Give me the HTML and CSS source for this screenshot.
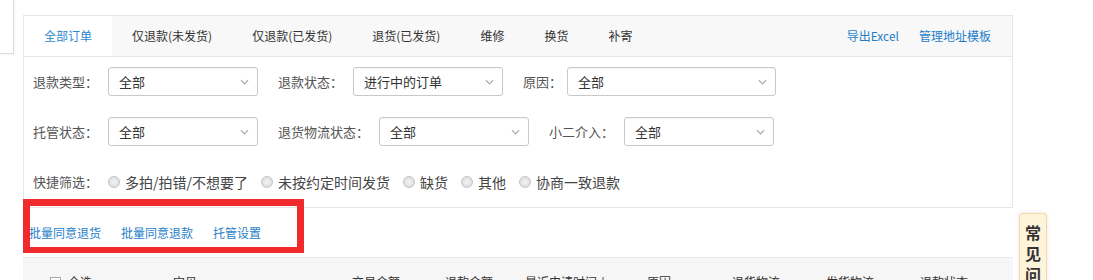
FILE: index.html
```html
<!DOCTYPE html>
<html>
<head>
  <meta charset="utf-8">
  <title>退款管理</title>
  <link rel="stylesheet" href="styles.css">
</head>
<body>

<div class="page">
  <div class="side-box"></div>

  <div class="main">
    <div class="filter-panel">
      <div class="tab-bar">
        <ul class="tabs">
          <li class="tab active">全部订单</li>
          <li class="tab">仅退款(未发货)</li>
          <li class="tab">仅退款(已发货)</li>
          <li class="tab">退货(已发货)</li>
          <li class="tab">维修</li>
          <li class="tab">换货</li>
          <li class="tab">补寄</li>
        </ul>
        <div class="tab-links">
          <a href="#">导出Excel</a>
          <a href="#">管理地址模板</a>
        </div>
      </div>

      <div class="filters">
        <div class="filter-row">
          <span class="filter-label">退款类型：</span>
          <div class="select">全部<svg class="arrow" viewBox="0 0 10 6"><path d="M1 1l4 4 4-4"/></svg></div>
          <span class="filter-label">退款状态：</span>
          <div class="select">进行中的订单<svg class="arrow" viewBox="0 0 10 6"><path d="M1 1l4 4 4-4"/></svg></div>
          <span class="filter-label short">原因：</span>
          <div class="select wide">全部<svg class="arrow" viewBox="0 0 10 6"><path d="M1 1l4 4 4-4"/></svg></div>
        </div>

        <div class="filter-row">
          <span class="filter-label">托管状态：</span>
          <div class="select">全部<svg class="arrow" viewBox="0 0 10 6"><path d="M1 1l4 4 4-4"/></svg></div>
          <span class="filter-label">退货物流状态：</span>
          <div class="select">全部<svg class="arrow" viewBox="0 0 10 6"><path d="M1 1l4 4 4-4"/></svg></div>
          <span class="filter-label">小二介入：</span>
          <div class="select">全部<svg class="arrow" viewBox="0 0 10 6"><path d="M1 1l4 4 4-4"/></svg></div>
        </div>

        <div class="filter-row">
          <span class="filter-label">快捷筛选：</span>
          <label class="radio-item"><span class="radio"></span>多拍/拍错/不想要了</label>
          <label class="radio-item"><span class="radio"></span>未按约定时间发货</label>
          <label class="radio-item"><span class="radio"></span>缺货</label>
          <label class="radio-item"><span class="radio"></span>其他</label>
          <label class="radio-item"><span class="radio"></span>协商一致退款</label>
        </div>
      </div>
    </div>

    <div class="batch-bar">
      <a href="#">批量同意退货</a>
      <a href="#">批量同意退款</a>
      <a href="#">托管设置</a>
    </div>

    <div class="table-head">
      <div class="col col-check"><span class="checkbox"></span>全选</div>
      <div class="col col-item">宝贝</div>
      <div class="col col-amount">交易金额</div>
      <div class="col col-refund">退款金额</div>
      <div class="col col-time">最近申请时间↓</div>
      <div class="col col-reason">原因</div>
      <div class="col col-ship">退货物流</div>
      <div class="col col-ship">发货物流</div>
      <div class="col">退款状态</div>
    </div>

    <div class="highlight"></div>
  </div>

  <div class="faq">常见问题</div>
</div>

</body>
</html>
```

FILE: styles.css
```css
body {
  margin: 0;
  height: 280px;
  overflow: hidden;
  background: #fff;
  font-family: "Microsoft YaHei", "Noto Sans CJK SC", sans-serif;
  font-size: 12px;
  color: #333;
}

a {
  color: #1f7ec9;
  text-decoration: none;
}

.page {
  display: flex;
  align-items: flex-start;
}

.side-box {
  width: 13px;
  height: 53px;
  border-right: 1px solid #dcdcdc;
  border-bottom: 1px solid #dcdcdc;
  box-shadow: 1px 1px 2px rgba(0,0,0,0.05);
}

.main {
  position: relative;
  width: 990px;
  margin-left: 9px;
  margin-top: 15px;
}

/* filter panel */
.filter-panel {
  border: 1px solid #e6e6e6;
}

.tab-bar {
  display: flex;
  justify-content: space-between;
  height: 40px;
  background: #f8f8f8;
  border-bottom: 1px solid #e6e6e6;
}

.tabs {
  display: flex;
  margin: 0;
  padding: 0;
  list-style: none;
}

.tab {
  padding: 0 20px;
  line-height: 40px;
  color: #333;
}

.tab.active {
  background: #fff;
  color: #2b87d1;
}

.tab-links {
  display: flex;
  gap: 20px;
  padding-right: 21px;
  line-height: 40px;
}

.filters {
  padding: 10px 9px 11px;
}

.filter-row {
  display: flex;
  align-items: center;
  height: 29px;
  margin-bottom: 21px;
  font-size: 13px;
  color: #555;
}

.filter-row:last-child {
  margin-bottom: 0;
}

.filter-label {
  margin-right: 10px;
}

.filter-label.short {
  margin-right: 5px;
}

.select {
  display: flex;
  align-items: center;
  justify-content: space-between;
  box-sizing: border-box;
  width: 150px;
  height: 29px;
  padding: 0 8px 0 10px;
  margin-right: 20px;
  border: 1px solid #c9c9c9;
  border-radius: 3px;
  color: #333;
  box-shadow: inset 0 1px 1px rgba(0,0,0,0.04);
}

.select.wide {
  width: 209px;
}

.arrow {
  width: 9px;
  height: 6px;
  fill: none;
  stroke: #a8a8a8;
  stroke-width: 1.3;
}

.radio-item {
  display: flex;
  align-items: center;
  margin-right: 13px;
  font-size: 14px;
  color: #444;
}

.radio {
  width: 10px;
  height: 10px;
  margin-right: 5px;
  border: 1px solid #c4c4c4;
  border-radius: 50%;
  background: radial-gradient(circle, #f4f4f4 0, #dcdcdc 80%);
}

/* batch actions */
.batch-bar {
  display: flex;
  gap: 20px;
  align-items: center;
  height: 49px;
  padding-left: 6px;
}

.highlight {
  position: absolute;
  left: 0;
  top: 184px;
  box-sizing: border-box;
  width: 281px;
  height: 54px;
  border: 7px solid #f12b2b;
  border-bottom-width: 6px;
}

/* table header */
.table-head {
  display: flex;
  align-items: flex-start;
  height: 40px;
  padding: 14px 0 0 27px;
  background: #f6f6f6;
  border-top: 1px solid #e8e8e8;
  line-height: 20px;
}

.col-check {
  display: flex;
  align-items: flex-start;
  width: 123px;
}

.checkbox {
  flex: none;
  width: 9px;
  height: 9px;
  margin: 5px 7px 0 0;
  border: 1px solid #aaa;
  background: linear-gradient(#fff, #e6e6e6);
}

.col-item { width: 179px; }
.col-amount { width: 93px; }
.col-refund { width: 80px; }
.col-time { width: 122px; }
.col-reason { width: 85px; }
.col-ship { width: 94px; }

/* side help tab */
.faq {
  width: 16px;
  margin-left: 6px;
  margin-top: 213px;
  padding: 8px 5px 0;
  background: #fdf4da;
  border: 1px solid #ecdcae;
  border-bottom: none;
  border-radius: 4px 4px 0 0;
  box-shadow: 0 0 4px rgba(240,180,180,0.4);
  font-size: 16px;
  font-weight: bold;
  line-height: 21px;
  color: #333;
  text-align: center;
}
```
